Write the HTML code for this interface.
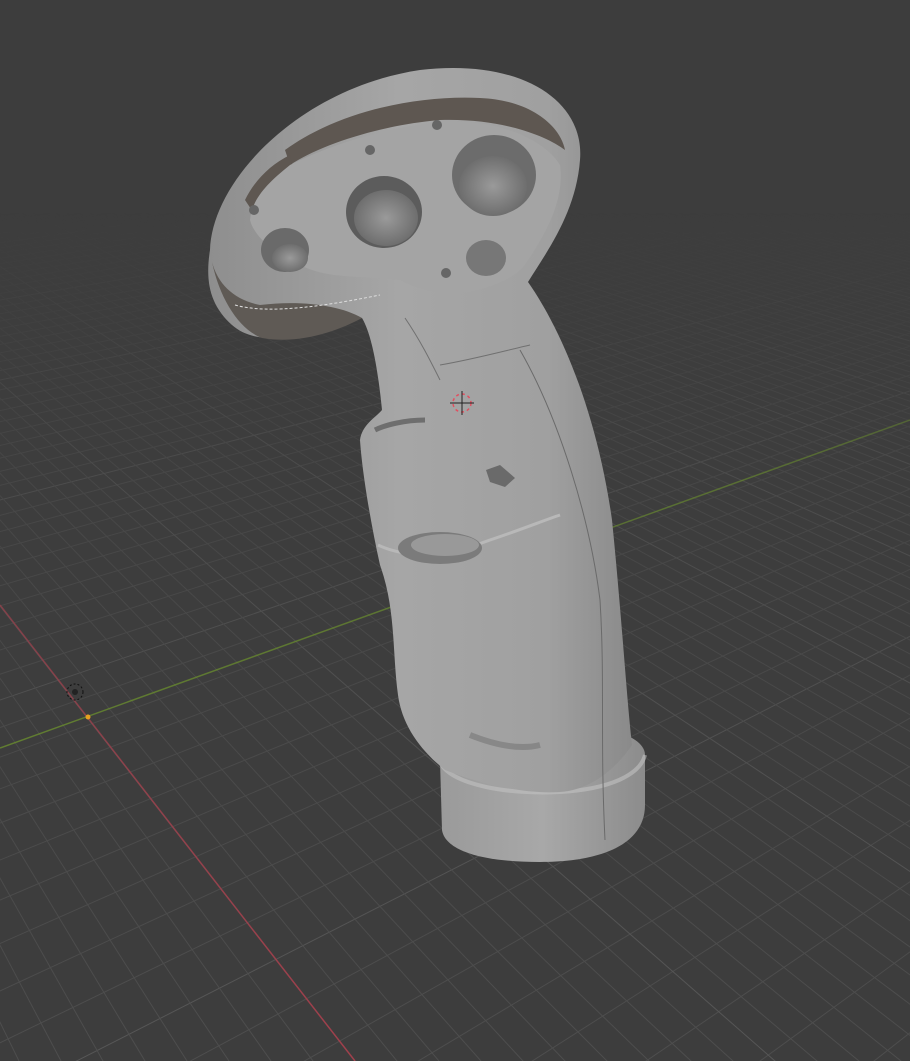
<!DOCTYPE html>
<html><head><meta charset="utf-8"><style>
html,body{margin:0;padding:0;background:#3d3d3d;width:910px;height:1061px;overflow:hidden;position:relative}
svg{display:block;position:absolute;left:0;top:0}
</style></head><body>
<svg id="s" width="910" height="1061" viewBox="0 0 910 1061" xmlns="http://www.w3.org/2000/svg">
<defs>
<linearGradient id="fade" x1="0" y1="0" x2="0" y2="1">
<stop offset="0" stop-color="#fff" stop-opacity="0"/>
<stop offset="0.2" stop-color="#fff" stop-opacity="0"/>
<stop offset="0.45" stop-color="#fff" stop-opacity="0.6"/>
<stop offset="1" stop-color="#fff" stop-opacity="1"/>
</linearGradient>
<mask id="m"><rect width="910" height="1061" fill="url(#fade)"/></mask>
<linearGradient id="body" x1="0" y1="0" x2="1" y2="0">
<stop offset="0" stop-color="#8e8e8e"/>
<stop offset="0.45" stop-color="#a6a6a6"/>
<stop offset="0.8" stop-color="#a0a0a0"/>
<stop offset="1" stop-color="#8a8a8a"/>
</linearGradient>
<linearGradient id="base" x1="0" y1="0" x2="1" y2="0">
<stop offset="0" stop-color="#9a9a9a"/>
<stop offset="0.5" stop-color="#a8a8a8"/>
<stop offset="1" stop-color="#8c8c8c"/>
</linearGradient>
<radialGradient id="hole"><stop offset="0" stop-color="#9a9a9a"/><stop offset="1" stop-color="#6e6e6e"/></radialGradient>
</defs>
<rect width="910" height="1061" fill="#3d3d3d"/>
<g id="grid" mask="url(#m)" stroke="#4e4e4e" stroke-width="1"></g>
<line x1="0" y1="748" x2="910" y2="420" stroke="#6b8f2e" stroke-width="1.5" mask="url(#m)"/>
<line x1="0" y1="605" x2="355" y2="1061" stroke="#a0404c" stroke-width="1.5" mask="url(#m)"/>

<circle cx="75" cy="692" r="8" fill="none" stroke="#111" stroke-width="1" stroke-dasharray="2 2"/>
<circle cx="75" cy="692" r="3" fill="#222"/>
<circle cx="88" cy="717" r="2.5" fill="#e8a020"/>

<path d="M440,760 C440,735 500,722 545,722 C600,722 645,735 645,755 L645,805 C645,845 600,862 540,862 C480,862 445,850 442,830 Z" fill="url(#base)"/>
<path d="M440,762 C450,785 510,795 560,792 C610,789 640,775 645,755" fill="none" stroke="#c2c2c2" stroke-width="4" opacity="0.6"/>

<path d="M210,250 C212,180 300,88 420,70 C520,58 585,100 580,160 C576,212 548,250 528,282 C565,335 598,420 612,520 C622,620 626,690 632,745 C615,770 590,790 560,792 C520,795 470,780 445,770 C420,750 402,725 398,695 C392,650 396,610 380,565 C370,520 362,470 360,440 C362,425 375,418 382,410 C378,370 372,335 362,318 C305,338 258,348 232,325 C210,305 205,282 210,250 Z" fill="url(#body)"/>

<path d="M212,262 C220,300 240,330 262,338 C300,345 340,330 362,318 C340,305 300,300 260,305 C235,300 218,285 212,262 Z" fill="#5f5a55"/>
<path d="M235,305 C270,315 330,305 380,295" fill="none" stroke="#ddd" stroke-width="1" stroke-dasharray="3 2"/>
<path d="M285,150 C340,110 420,95 480,98 C530,100 560,125 565,150 C545,135 500,118 440,120 C380,125 320,145 290,165 Z" fill="#5e5751"/>
<path d="M245,200 C255,180 270,165 290,155 L295,175 C275,185 260,200 255,215 Z" fill="#5e5751"/>
<path d="M290,165 C330,145 390,125 450,122 C500,120 545,140 560,165 C565,200 545,235 528,260 C520,275 500,285 470,292 C440,295 420,290 400,280 C360,275 330,280 300,265 C280,255 255,240 250,220 C252,200 265,185 290,165 Z" fill="#a4a4a4"/>
<ellipse cx="384" cy="212" rx="38" ry="36" fill="#5c5c5c"/>
<ellipse cx="386" cy="218" rx="32" ry="28" fill="url(#hole)"/>
<ellipse cx="494" cy="175" rx="42" ry="40" fill="#6c6c6c"/>
<ellipse cx="493" cy="186" rx="34" ry="30" fill="url(#hole)"/>
<ellipse cx="285" cy="250" rx="24" ry="22" fill="#6a6a6a"/>
<ellipse cx="290" cy="258" rx="18" ry="14" fill="url(#hole)"/>
<ellipse cx="486" cy="258" rx="20" ry="18" fill="#777"/>
<circle cx="370" cy="150" r="5" fill="#666"/>
<circle cx="437" cy="125" r="5" fill="#666"/>
<circle cx="254" cy="210" r="5" fill="#666"/>
<circle cx="446" cy="273" r="5" fill="#666"/>

<path d="M520,350 C560,420 590,520 600,600 C605,680 600,740 605,840" fill="none" stroke="#6a6a6a" stroke-width="1"/>
<path d="M405,318 C420,340 430,360 440,380" fill="none" stroke="#707070" stroke-width="1"/>
<path d="M440,365 C470,360 500,352 530,345" fill="none" stroke="#707070" stroke-width="1"/>
<path d="M375,430 C385,425 405,420 425,420" fill="none" stroke="#6e6e6e" stroke-width="5"/>
<path d="M378,545 C410,560 450,555 490,540 C520,530 545,520 560,515" fill="none" stroke="#b8b8b8" stroke-width="3"/>
<ellipse cx="440" cy="548" rx="42" ry="16" fill="#7b7b7b"/>
<ellipse cx="445" cy="545" rx="34" ry="11" fill="#999"/>
<path d="M486,470 L500,465 L515,478 L505,487 L490,482 Z" fill="#6a6a6a"/>
<path d="M470,735 C495,745 520,750 540,745" fill="none" stroke="#777" stroke-width="6" opacity="0.6"/>

<circle cx="462" cy="403" r="9" fill="none" stroke="#e05060" stroke-width="1.5" stroke-dasharray="3 3"/>
<line x1="450" y1="403" x2="474" y2="403" stroke="#222" stroke-width="1"/>
<line x1="462" y1="391" x2="462" y2="415" stroke="#222" stroke-width="1"/>
</svg>
<script>
(function(){
var g=document.getElementById('grid'),h='';
var V1x=2355,V1y=-100;
for(var k=9;k<220;k++){
 var y0=-100+24000/k;
 var dx=0-V1x,dy=y0-V1y;
 var t=(-2000-V1x)/dx;
 h+='<line x1="'+V1x+'" y1="'+V1y+'" x2="-2000" y2="'+(V1y+dy*t).toFixed(1)+'"'+(k%10==0?' stroke="#575757"':'')+'/>';
}
var V2x=-551,V2y=-100;
for(var i=-40;i<180;i++){
 var bx=355+i*42;
 var dx2=bx-V2x,dy2=1061-V2y;
 var t2=1.2;
 h+='<line x1="'+V2x+'" y1="'+V2y+'" x2="'+(V2x+dx2*t2).toFixed(1)+'" y2="'+(V2y+dy2*t2).toFixed(1)+'"'+(i%10==0?' stroke="#575757"':'')+'/>';
}
g.innerHTML=h;
})();
</script>
</body></html>
